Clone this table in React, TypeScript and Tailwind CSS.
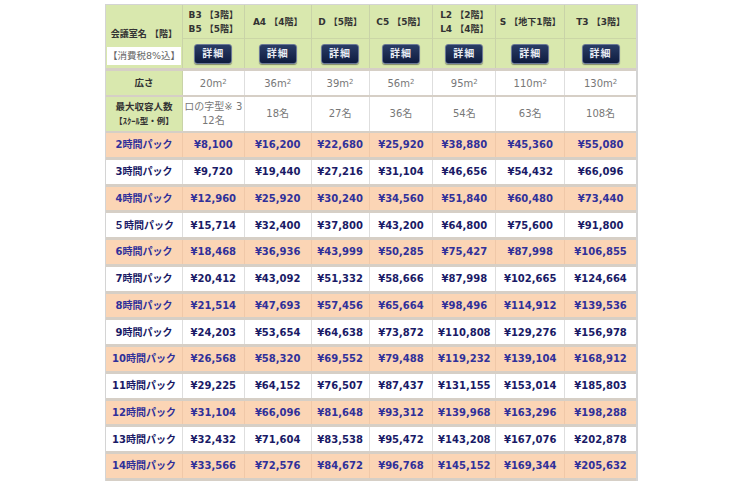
const cols = [
  { w: 'w-[62px]', name: ['B3 【3階】', 'B5 【5階】'], area: '20', cap: ['ロの字型※ 3', '12名'] },
  { w: 'w-[67px]', name: ['A4 【4階】'], area: '36', cap: ['18名'] },
  { w: 'w-[58px]', name: ['D 【5階】'], area: '39', cap: ['27名'] },
  { w: 'w-[64px]', name: ['C5 【5階】'], area: '56', cap: ['36名'] },
  { w: 'w-[63px]', name: ['L2 【2階】', 'L4 【4階】'], area: '95', cap: ['54名'] },
  { w: 'w-[69px]', name: ['S 【地下1階】'], area: '110', cap: ['63名'] },
  { w: 'w-[71px]', name: ['T3 【3階】'], area: '130', cap: ['108名'] }
];

const packs = [
  { label: '2時間パック', prices: ['¥8,100', '¥16,200', '¥22,680', '¥25,920', '¥38,880', '¥45,360', '¥55,080'] },
  { label: '3時間パック', prices: ['¥9,720', '¥19,440', '¥27,216', '¥31,104', '¥46,656', '¥54,432', '¥66,096'] },
  { label: '4時間パック', prices: ['¥12,960', '¥25,920', '¥30,240', '¥34,560', '¥51,840', '¥60,480', '¥73,440'] },
  { label: '５時間パック', prices: ['¥15,714', '¥32,400', '¥37,800', '¥43,200', '¥64,800', '¥75,600', '¥91,800'] },
  { label: '6時間パック', prices: ['¥18,468', '¥36,936', '¥43,999', '¥50,285', '¥75,427', '¥87,998', '¥106,855'] },
  { label: '7時間パック', prices: ['¥20,412', '¥43,092', '¥51,332', '¥58,666', '¥87,998', '¥102,665', '¥124,664'] },
  { label: '8時間パック', prices: ['¥21,514', '¥47,693', '¥57,456', '¥65,664', '¥98,496', '¥114,912', '¥139,536'] },
  { label: '9時間パック', prices: ['¥24,203', '¥53,654', '¥64,638', '¥73,872', '¥110,808', '¥129,276', '¥156,978'] },
  { label: '10時間パック', prices: ['¥26,568', '¥58,320', '¥69,552', '¥79,488', '¥119,232', '¥139,104', '¥168,912'] },
  { label: '11時間パック', prices: ['¥29,225', '¥64,152', '¥76,507', '¥87,437', '¥131,155', '¥153,014', '¥185,803'] },
  { label: '12時間パック', prices: ['¥31,104', '¥66,096', '¥81,648', '¥93,312', '¥139,968', '¥163,296', '¥198,288'] },
  { label: '13時間パック', prices: ['¥32,432', '¥71,604', '¥83,538', '¥95,472', '¥143,208', '¥167,076', '¥202,878'] },
  { label: '14時間パック', prices: ['¥33,566', '¥72,576', '¥84,672', '¥96,768', '¥145,152', '¥169,344', '¥205,632'] }
];

// 詳細 button
function DetailButton() {
  return (
    <div className="flex h-[20px] w-[38px] items-center justify-center rounded-[3px] border border-[#6a7896] bg-gradient-to-b from-[#2a3d66] to-[#0f1c3f] text-[10px] font-bold tracking-[1px] text-[#e8ecf4] shadow-[0_1px_1px_rgba(0,0,0,0.4)]">
      詳細
    </div>
  );
}

export default function App() {
  return (
    <div className="h-[490px] w-[740px] bg-white pl-[105px] pt-[4px] font-['DejaVu_Sans','Noto_Sans_CJK_JP',sans-serif]">
      <div className="w-[533px] border-l border-r-2 border-t border-[#d4d4d4]">
        {/* header */}
        <div className="flex border-b-[3px] border-[#d6cfc6] bg-[#d9e8ae]">
          <div className="flex w-[77px] flex-col items-center justify-end border-r border-[#c9d3a8] pb-[2px]">
            <div className="mb-[5px] text-[9px] font-bold text-[#333]">会議室名 【階】</div>
            <div className="mb-[1px] w-[74px] bg-white py-[2px] text-center text-[9.5px] text-[#666]">【消費税8%込】</div>
          </div>
          {cols.map((c, i) => (
            <div key={i} className={`${c.w} flex flex-col border-r border-[#c9d3a8] last:border-r-0`}>
              <div className="flex h-[34px] flex-col items-center justify-center border-b border-[#cbd6a6] pt-[1px] text-[9px] font-bold leading-[14px] text-[#333]">
                {c.name.map((n) => (
                  <div key={n}>{n}</div>
                ))}
              </div>
              <div className="flex h-[29px] items-center justify-center">
                <DetailButton />
              </div>
            </div>
          ))}
        </div>

        {/* 広さ */}
        <div className="flex h-[26px] border-b-2 border-[#d6cfc6]">
          <div className="flex w-[77px] items-center justify-center border-r border-[#c9d3a8] bg-[#d9e8ae] text-[9.5px] font-bold text-[#333]">
            広さ
          </div>
          {cols.map((c, i) => (
            <div key={i} className={`${c.w} flex items-center justify-center border-r border-[#dedede] text-[10px] text-[#777] last:border-r-0`}>
              {c.area}m<sup className="relative top-[-1px] text-[7px]">2</sup>
            </div>
          ))}
        </div>

        {/* 最大収容人数 */}
        <div className="flex h-[36px] border-b-2 border-[#d6cfc6]">
          <div className="flex w-[77px] flex-col items-center justify-center border-r border-[#c9d3a8] bg-[#d9e8ae] font-bold leading-[15px] text-[#333]">
            <div className="text-[9.5px]">最大収容人数</div>
            <div className="text-[8.5px]">【ｽｸｰﾙ型・例】</div>
          </div>
          {cols.map((c, i) => (
            <div key={i} className={`${c.w} flex flex-col items-center justify-center border-r border-[#dedede] text-[10px] leading-[14px] text-[#777] last:border-r-0`}>
              {c.cap.map((t) => (
                <div key={t}>{t}</div>
              ))}
            </div>
          ))}
        </div>

        {/* packs */}
        {packs.map((p, r) => {
          const odd = r % 2 === 0;
          return (
            <div
              key={p.label}
              className={`flex h-[26.75px] border-b-[3px] border-[#d6cfc6] text-[10px] font-bold ${
                odd ? 'bg-[#fbd5b5] text-[#30309a]' : 'bg-white text-[#1a1a66]'
              }`}
            >
              <div className={`flex w-[77px] items-center justify-center border-r ${odd ? 'border-[#f0c8a8]' : 'border-[#dedede]'}`}>
                {p.label}
              </div>
              {p.prices.map((v, i) => (
                <div
                  key={i}
                  className={`${cols[i].w} flex items-center justify-center border-r last:border-r-0 ${
                    odd ? 'border-[#f0c8a8]' : 'border-[#dedede]'
                  }`}
                >
                  {v}
                </div>
              ))}
            </div>
          );
        })}
      </div>
    </div>
  );
}
